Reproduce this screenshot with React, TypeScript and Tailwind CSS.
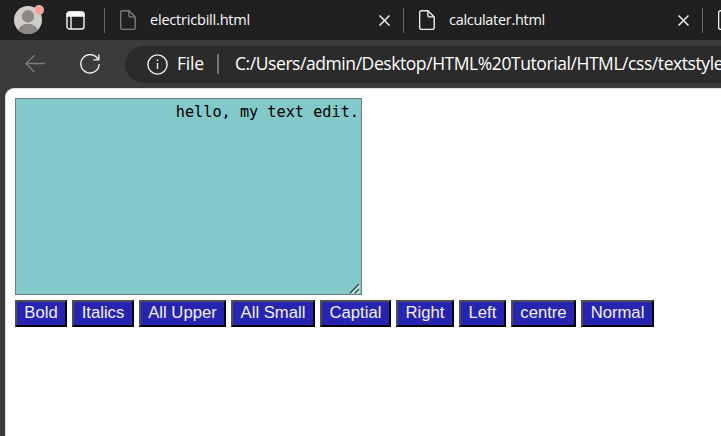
import React from "react";

const uiFont = "font-['Segoe_UI','Open_Sans','Noto_Sans',sans-serif]";

function PageIcon({ color }: { color: string }) {
  return (
    <svg className="block shrink-0" width="16" height="20" viewBox="0 0 16 20" fill="none" stroke={color} strokeWidth="1.4" strokeLinejoin="round">
      <path d="M2.6.7h6.3l6.3 6.2v10.5a2 2 0 0 1-2 2H2.6a2 2 0 0 1-2-2V2.7a2 2 0 0 1 2-2Z" />
      <path d="M8.9.9v4.3a1.7 1.7 0 0 0 1.7 1.7h4.3" />
    </svg>
  );
}

function CloseIcon() {
  return (
    <svg className="block shrink-0" width="11" height="11" viewBox="0 0 11 11" stroke="#eeeeee" strokeWidth="1.5">
      <path d="m.5.5 10 10m0-10-10 10" />
    </svg>
  );
}

function Tab({ title, iconColor, tracking }: { title: string; iconColor: string; tracking: string }) {
  return (
    <div className="flex h-10 w-[299px] shrink-0 items-center">
      <div className="h-[25px] w-px shrink-0 bg-[#686868]" />
      <div className="ml-[15px]"><PageIcon color={iconColor} /></div>
      <span className={`ml-[14px] w-[229px] shrink-0 whitespace-nowrap text-[14.5px] leading-5 text-[#f8f8f8] ${tracking}`}>{title}</span>
      <div className="mt-px"><CloseIcon /></div>
    </div>
  );
}

const buttons = [
  { label: "Bold", width: "w-[52px]" },
  { label: "Italics", width: "w-[62px]" },
  { label: "All Upper", width: "w-[87px]" },
  { label: "All Small", width: "w-[84px]" },
  { label: "Captial", width: "w-[71px]" },
  { label: "Right", width: "w-[58px]" },
  { label: "Left", width: "w-[47px]" },
  { label: "centre", width: "w-[65px]" },
  { label: "Normal", width: "w-[73px]" },
];

export default function App() {
  return (
    <div className={`h-[436px] w-[721px] overflow-hidden bg-[#3b3b3b] ${uiFont}`}>
      <header className="flex h-10 items-center overflow-hidden bg-[#202020]">
        <svg className="ml-[13px] block shrink-0" width="32" height="32" viewBox="0 0 32 32">
          <defs><clipPath id="avatar"><circle cx="15" cy="16" r="14" /></clipPath></defs>
          <circle cx="15" cy="16" r="14" fill="#cfcdca" />
          <g fill="#8b8784" clipPath="url(#avatar)">
            <circle cx="15" cy="12.3" r="6.2" />
            <ellipse cx="15" cy="27.2" rx="10" ry="7.5" />
          </g>
          <circle cx="26" cy="6" r="4.9" fill="#cfcdca" />
          <circle cx="26" cy="6" r="4.2" fill="#ff9f94" />
        </svg>
        <svg className="ml-[20.5px] mr-[19.5px] block shrink-0" width="19" height="19" viewBox="0 0 19 19" fill="none" stroke="#f4f4f4" strokeWidth="1.4">
          <rect x="1" y="1" width="17" height="17" rx="2.5" />
          <path d="M1 3.5A2.5 2.5 0 0 1 3.5 1h12A2.5 2.5 0 0 1 18 3.5V5H1Z" fill="#fff" />
          <path d="M5 5v13" />
        </svg>
        <Tab title="electricbill.html" iconColor="#7c7c7c" tracking="tracking-[-0.2px]" />
        <Tab title="calculater.html" iconColor="#efefef" tracking="tracking-[-0.3px]" />
        <Tab title="" iconColor="#efefef" tracking="tracking-normal" />
      </header>

      <nav className="flex h-12 items-center">
        <svg className="ml-[25px] block shrink-0" width="20" height="18" viewBox="0 0 20 18" fill="none" stroke="#7c7c7c" strokeWidth="1.3">
          <path d="M20 8.5H.9M9.6.3.9 8.5l8.7 8.7" />
        </svg>
        <svg className="ml-[35px] block shrink-0" width="20" height="20" viewBox="0 0 20 20" fill="none" stroke="#eeeeee" strokeWidth="1.4">
          <path d="M18.3 5.8A9.2 9.2 0 1 0 19.2 10M18.8.5v5.4h-5.5" />
        </svg>
        <div className="-mr-px ml-[25px] flex h-[37px] min-w-0 flex-1 items-center rounded-l-full bg-[#2b2b2b] text-white">
          <svg className="ml-[22px] block shrink-0" width="21" height="21" viewBox="0 0 21 21" fill="none" stroke="#eeeeee" strokeWidth="1.4">
            <circle cx="10.5" cy="10.5" r="9.6" />
            <path d="M10.5 9v6" />
            <circle cx="10.5" cy="6.2" r=".9" fill="#eeeeee" stroke="none" />
          </svg>
          <span className="mb-[2px] ml-[9px] w-10 shrink-0 text-[17.5px] leading-6 tracking-[-0.2px]">File</span>
          <div className="h-5 w-[2px] shrink-0 bg-[#777]" />
          <span className="mb-[2px] ml-4 text-[17.5px] leading-6 tracking-[-0.43px] whitespace-nowrap">C:/Users/admin/Desktop/HTML%20Tutorial/HTML/css/textstyle</span>
        </div>
      </nav>

      <main className="ml-[5px] h-[348px] rounded-tl-[9px] border-t border-l border-[#dedede] bg-white pt-[9px] pl-[9px]">
        <div className="relative w-[347px]">
          <textarea
            readOnly
            value="hello, my text edit."
            className="block h-[197px] w-[347px] resize-none rounded-none border border-[#767676] bg-[#84c9c9] px-[2px] py-[3px] text-right font-['Consolas','DejaVu_Sans_Mono',monospace] text-[15.23px] leading-5 text-black outline-none"
          />
          <svg className="absolute right-[2px] bottom-[1px] block" width="11" height="11" viewBox="0 0 11 11" fill="none" strokeWidth="1.3">
            <path d="M1.8 10.5 10.5 1.8M6.8 10.5l3.7-3.7" stroke="#e1f1ef" transform="translate(.7 .7)" />
            <path d="M.8 10.2 9.8 1.2M5.8 10.2l4-4" stroke="#354b4b" />
          </svg>
        </div>
        <div className="mt-[5px] flex gap-[5px]">
          {buttons.map(({ label, width }) => (
            <button key={label} className={`${width} h-[27px] shrink-0 border-2 border-t-[#505050] border-r-black border-b-black border-l-[#505050] bg-[#2724b2] pb-[2px] text-center font-['Liberation_Sans',Arial,sans-serif] text-[16.67px] leading-[21px] whitespace-nowrap text-[#f0f0f0]`}>
              {label}
            </button>
          ))}
        </div>
      </main>
    </div>
  );
}
